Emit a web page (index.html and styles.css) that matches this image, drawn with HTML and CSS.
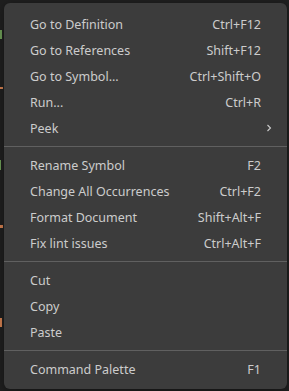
FILE: index.html
```html
<!DOCTYPE html>
<html lang="en">
  <head>
    <meta charset="UTF-8" />
    <title>Editor context menu</title>
    <link rel="stylesheet" href="styles.css">
  </head>
  <body>
    <div class="editor">
      <!-- slivers of code peeking out from under the menu -->
      <div class="code">
        <span class="tok tok-green t1"></span>
        <span class="tok tok-orange t2"></span>
        <span class="tok tok-green t3"></span>
        <span class="tok tok-orange t4"></span>
        <span class="tok tok-orange t5"></span>
      </div>

      <ul class="context-menu">
        <li class="menu-item"><span class="label">Go to Definition</span><span class="keys">Ctrl+F12</span></li>
        <li class="menu-item"><span class="label">Go to References</span><span class="keys">Shift+F12</span></li>
        <li class="menu-item"><span class="label">Go to Symbol...</span><span class="keys">Ctrl+Shift+O</span></li>
        <li class="menu-item"><span class="label">Run...</span><span class="keys">Ctrl+R</span></li>
        <li class="menu-item has-sub">
          <span class="label">Peek</span>
          <svg class="chevron" width="8" height="8" viewBox="0 0 8 8">
            <path d="M2.5 1 L5.5 4 L2.5 7" fill="none" stroke="#cccccc" stroke-width="1.1" />
          </svg>
        </li>
        <li class="separator"></li>
        <li class="menu-item"><span class="label">Rename Symbol</span><span class="keys">F2</span></li>
        <li class="menu-item"><span class="label">Change All Occurrences</span><span class="keys">Ctrl+F2</span></li>
        <li class="menu-item"><span class="label">Format Document</span><span class="keys">Shift+Alt+F</span></li>
        <li class="menu-item"><span class="label">Fix lint issues</span><span class="keys">Ctrl+Alt+F</span></li>
        <li class="separator"></li>
        <li class="menu-item"><span class="label">Cut</span></li>
        <li class="menu-item"><span class="label">Copy</span></li>
        <li class="menu-item"><span class="label">Paste</span></li>
        <li class="separator"></li>
        <li class="menu-item"><span class="label">Command Palette</span><span class="keys">F1</span></li>
      </ul>
    </div>
  </body>
</html>
```

FILE: styles.css
```css
* {
  box-sizing: border-box;
  margin: 0;
  padding: 0;
}

html,
body {
  height: 100%;
  overflow: hidden;
}

body {
  background-color: #1f1f1f;
  font-family: "Noto Sans", "Open Sans", sans-serif;
  color: #cccccc;
}

.editor {
  position: relative;
  height: 100%;
}

.code {
  height: 100%;
}

/* edges of code glyphs left of the menu */
.tok {
  position: absolute;
  left: 0;
  width: 3px;
}
.tok-green {
  background-color: #6a9955;
}
.tok-orange {
  background-color: #ce7d4e;
}
.t1 { top: 30px; height: 9px; width: 2px; }
.t2 { top: 87px; height: 2px; }
.t3 { top: 160px; height: 10px; width: 1px; }
.t4 { top: 225px; height: 3px; }
.t5 { top: 318px; height: 9px; width: 2px; }

.context-menu {
  position: absolute;
  top: 3px;
  left: 4px;
  width: 283px;
  list-style: none;
  padding: 8px 0 7px;
  background-color: #3c3c3c;
  border-radius: 6px;
  box-shadow: 0 2px 8px rgba(0, 0, 0, 0.36);
}

.menu-item {
  position: relative;
  display: flex;
  align-items: center;
  justify-content: space-between;
  height: 26px;
  padding: 1px 26px 0;
  font-size: 12.5px;
  white-space: nowrap;
}

.keys {
  padding-left: 16px;
}

.chevron {
  position: absolute;
  right: 14px;
  top: 9px;
}

.separator {
  height: 11px;
  display: flex;
  align-items: center;
}
.separator::before {
  content: "";
  display: block;
  width: 100%;
  height: 1px;
  background-color: #606060;
}
```
